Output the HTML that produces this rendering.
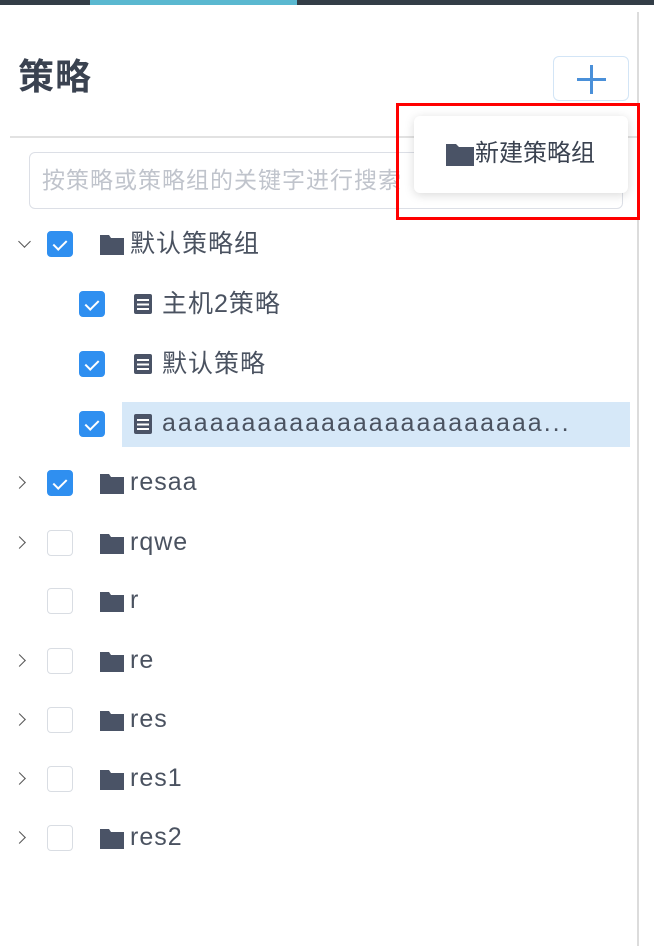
<!DOCTYPE html>
<html><head><meta charset="utf-8"><style>
*{margin:0;padding:0;box-sizing:border-box}
body{width:654px;height:946px;background:#fff;position:relative;overflow:hidden;font-family:"Liberation Sans","Noto Sans CJK SC",sans-serif;color:#4a5260}
.a{position:absolute}
.cb{position:absolute;width:26px;height:26px;border-radius:4px;border:1px solid #d9dde3;background:#fff}
.cb.on{background:#2f8ff0;border-color:#2f8ff0}
.cb.on::after{content:"";position:absolute;left:8px;top:5px;width:6px;height:11px;border:solid #fff;border-width:0 2px 2px 0;transform:rotate(45deg)}
.t{position:absolute;font-size:25px;line-height:30px;white-space:nowrap;letter-spacing:1px}
.arr{position:absolute;width:9px;height:9px;border:solid #555;border-width:0 1.6px 1.6px 0}
</style></head><body>
<div class="a" style="left:0;top:0;width:654px;height:5px;background:#333d47"></div>
<div class="a" style="left:90px;top:0;width:207px;height:5px;background:#5ab8d0"></div>
<div class="a" style="left:637px;top:12px;width:1.5px;height:934px;background:#dcdcdc"></div>
<div class="a" style="left:10px;top:136px;width:628px;height:1.5px;background:#e2e2e2"></div>
<div class="t" style="left:18px;top:56px;font-size:36px;line-height:42px;font-weight:bold;color:#3a4250;letter-spacing:1px">策略</div>
<div class="a" style="left:553px;top:56px;width:76px;height:45px;border:1.5px solid #d3e5f6;border-radius:6px"></div>
<div class="a" style="left:590px;top:65px;width:3px;height:29px;background:#4a90d9"></div>
<div class="a" style="left:577px;top:78px;width:29px;height:3px;background:#4a90d9"></div>
<div class="a" style="left:29px;top:152px;width:594px;height:57px;border:1px solid #dcdfe6;border-radius:6px"></div>
<div class="t" style="left:42px;top:165px;font-size:23px;color:#c0c4cc">按策略或策略组的关键字进行搜索</div>
<div class="a" style="left:414px;top:116px;width:214px;height:77px;background:#fff;border-radius:6px;box-shadow:0 2px 10px rgba(0,0,0,.15)"></div>
<svg class="a" style="left:446px;top:144px" width="28" height="22" viewBox="0 0 28 22"><path d="M0 0h10l3 3h15v19H0z" fill="#4a5366"/></svg>
<div class="t" style="left:475px;top:139px;font-size:24px;color:#3a4250;letter-spacing:0">新建策略组</div>
<div class="a" style="left:396px;top:103px;width:244px;height:117px;border:3px solid #f00"></div>
<div class="a" style="left:122px;top:402px;width:508px;height:45px;background:#d6e8f8"></div>
<svg width="0" height="0" style="position:absolute"><defs>
<symbol id="fd" viewBox="0 0 24 20"><path d="M0 0h9l2 3h13v17H0z" fill="#4a5366"/></symbol>
<symbol id="fl" viewBox="0 0 18 20"><rect x="0" y="0" width="18" height="20" rx="2" fill="#4a5366"/><rect x="3" y="5" width="12" height="2" fill="#fff"/><rect x="3" y="9.5" width="12" height="2" fill="#fff"/><rect x="3" y="14" width="12" height="2" fill="#fff"/></symbol>
</defs></svg>
<div class="arr" style="left:20px;top:237px;transform:rotate(45deg)"></div>
<div class="cb on" style="left:47px;top:231px"></div>
<svg class="a" style="left:100px;top:235px" width="24" height="20"><use href="#fd"/></svg>
<div class="t" style="left:130px;top:229px">默认策略组</div>
<div class="cb on" style="left:79px;top:291px"></div>
<svg class="a" style="left:134px;top:294px" width="18" height="20"><use href="#fl"/></svg>
<div class="t" style="left:162px;top:289px">主机2策略</div>
<div class="cb on" style="left:79px;top:351px"></div>
<svg class="a" style="left:134px;top:354px" width="18" height="20"><use href="#fl"/></svg>
<div class="t" style="left:162px;top:349px">默认策略</div>
<div class="cb on" style="left:79px;top:411px"></div>
<svg class="a" style="left:134px;top:414px" width="18" height="20"><use href="#fl"/></svg>
<div class="t" style="left:162px;top:408px;font-size:25px;letter-spacing:2px">aaaaaaaaaaaaaaaaaaaaaaaa...</div>
<div class="arr" style="left:15px;top:478px;transform:rotate(-45deg)"></div>
<div class="cb on" style="left:47px;top:470px"></div>
<svg class="a" style="left:100px;top:474px" width="24" height="20"><use href="#fd"/></svg>
<div class="t" style="left:130px;top:467px">resaa</div>
<div class="arr" style="left:15px;top:538px;transform:rotate(-45deg)"></div>
<div class="cb" style="left:47px;top:530px"></div>
<svg class="a" style="left:100px;top:534px" width="24" height="20"><use href="#fd"/></svg>
<div class="t" style="left:130px;top:527px">rqwe</div>
<div class="cb" style="left:47px;top:588px"></div>
<svg class="a" style="left:100px;top:592px" width="24" height="20"><use href="#fd"/></svg>
<div class="t" style="left:130px;top:585px">r</div>
<div class="arr" style="left:15px;top:656px;transform:rotate(-45deg)"></div>
<div class="cb" style="left:47px;top:648px"></div>
<svg class="a" style="left:100px;top:652px" width="24" height="20"><use href="#fd"/></svg>
<div class="t" style="left:130px;top:645px">re</div>
<div class="arr" style="left:15px;top:715px;transform:rotate(-45deg)"></div>
<div class="cb" style="left:47px;top:707px"></div>
<svg class="a" style="left:100px;top:711px" width="24" height="20"><use href="#fd"/></svg>
<div class="t" style="left:130px;top:704px">res</div>
<div class="arr" style="left:15px;top:774px;transform:rotate(-45deg)"></div>
<div class="cb" style="left:47px;top:766px"></div>
<svg class="a" style="left:100px;top:770px" width="24" height="20"><use href="#fd"/></svg>
<div class="t" style="left:130px;top:763px">res1</div>
<div class="arr" style="left:15px;top:833px;transform:rotate(-45deg)"></div>
<div class="cb" style="left:47px;top:825px"></div>
<svg class="a" style="left:100px;top:829px" width="24" height="20"><use href="#fd"/></svg>
<div class="t" style="left:130px;top:822px">res2</div>
</body></html>
